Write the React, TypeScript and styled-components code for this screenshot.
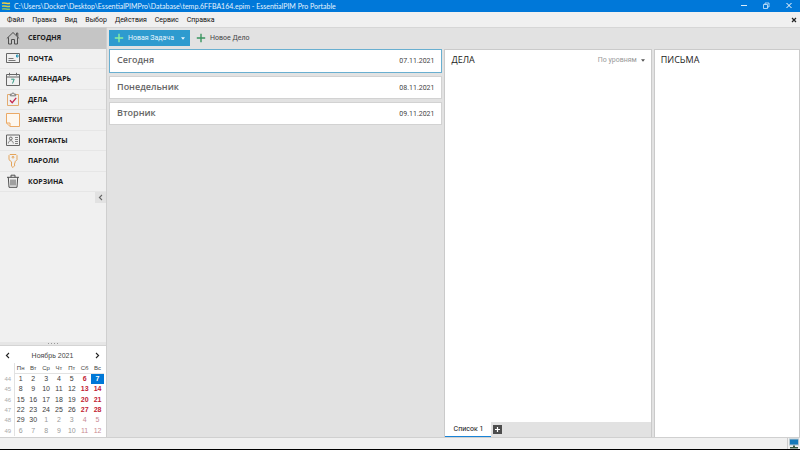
import React from 'react';
import styled, { createGlobalStyle } from 'styled-components';

const GlobalStyle = createGlobalStyle`
  * { box-sizing: border-box; }
  body { margin: 0; font-family: Roboto, "Noto Sans", sans-serif; font-size: 7px; color: #222; }
  button { font: inherit; color: inherit; background: none; border: 0; padding: 0; margin: 0; cursor: default; white-space: nowrap; }
  svg { display: block; flex: none; }
  h1, h2 { margin: 0; font-weight: 400; }
`;

const Window = styled.div`
  min-height: 100vh;
  display: flex;
  flex-direction: column;
  background: #f0f0f0;
  border-bottom: 1px solid #000;
`;

const TitleBar = styled.header`
  height: 12px;
  background: #0078d9;
  color: #e6f4ff;
  display: flex;
  align-items: center;
  padding: 0 7px 0 1px;
  gap: 3px;
`;

const Title = styled.h1`
  flex: 1;
  font-family: Lato, "Noto Sans", sans-serif;
  font-size: 7px;
  line-height: 12px;
  white-space: nowrap;
`;

const WindowButtons = styled.div`
  display: flex;
  gap: 14px;
`;

const MenuBar = styled.nav`
  height: 15px;
  display: flex;
  align-items: center;
  gap: 8px;
  padding: 0 3px 0 7px;
  color: #111;
`;

const MenuClose = styled.button`
  margin-left: auto;
`;

const Body = styled.div`
  flex: 1;
  display: flex;
`;

const Sidebar = styled.aside`
  width: 107px;
  flex: none;
  display: flex;
  flex-direction: column;
  border-top: 1px solid #cfcfcf;
  border-right: 1px solid #cfcfcf;
`;

const NavList = styled.nav`
  height: 164px;
  display: grid;
  grid-template-rows: repeat(8, 1fr);
`;

const NavItem = styled.button<{ $active?: boolean }>`
  display: flex;
  align-items: center;
  gap: 8px;
  padding: 0 6px;
  text-align: left;
  font-family: "Open Sans", "Noto Sans", sans-serif;
  font-size: 7px;
  font-weight: 700;
  color: #1c1c1c;
  background: ${p => (p.$active ? '#c5c5c5' : 'transparent')};
  border-bottom: 1px solid ${p => (p.$active ? '#c5c5c5' : '#e6e6e6')};
`;

const CollapseButton = styled.button`
  align-self: flex-end;
  width: 11px;
  height: 11px;
  display: grid;
  place-items: center;
  background: #e2e2e2;
`;

const Splitter = styled.div`
  margin-top: auto;
  height: 4px;
  display: flex;
  align-items: center;
  justify-content: center;
  gap: 2px;
  background: #e6e6e6;
  border-bottom: 1px solid #d4d4d4;
`;

const Dot = styled.span`
  width: 1px;
  height: 1px;
  background: #999;
`;

const Calendar = styled.section`
  background: #fff;
  font-family: "Liberation Sans", Arial, sans-serif;
  padding: 2px 2px 1px;
`;

const CalendarHead = styled.div`
  display: flex;
  align-items: center;
  justify-content: space-between;
  height: 15px;
  padding: 0 4px 0 3px;
  color: #444;
`;

const Days = styled.table`
  width: 100%;
  height: 73px;
  table-layout: fixed;
  border-collapse: collapse;
  text-align: center;
  line-height: 8px;
`;

const DayName = styled.th`
  height: 10px;
  padding: 0;
  font-weight: 400;
  font-size: 6px;
  color: #444;
  border-bottom: 1px solid #e2e2e2;
`;

const WeekNumber = styled.th`
  padding: 0;
  width: 12px;
  font-weight: 400;
  font-size: 6px;
  color: #aaa;
  border-right: 1px solid #e2e2e2;
`;

const Day = styled.td<{ $weekend: boolean; $muted: boolean; $selected: boolean }>`
  padding: 0;
  color: ${p => (p.$selected ? '#fff' : p.$muted ? (p.$weekend ? '#c98a92' : '#999') : p.$weekend ? '#c22233' : '#3c3c3c')};
  font-weight: ${p => (p.$weekend && !p.$muted ? 700 : 400)};
  background: ${p => (p.$selected ? '#0078d7' : 'transparent')};
`;

const Workspace = styled.main`
  flex: 1;
  min-width: 0;
  display: flex;
  flex-direction: column;
  background: #e2e2e2;
  border-top: 1px solid #d6d6d6;
`;

const Toolbar = styled.div`
  height: 21px;
  display: flex;
  align-items: center;
  padding: 2px 2px 3px;
  gap: 6px;
`;

const SplitButton = styled.div`
  height: 16px;
  width: 81px;
  display: flex;
  background: #2e9bcf;
  color: #e8f6fd;
`;

const ToolButton = styled.button`
  flex: 1;
  display: flex;
  align-items: center;
  gap: 4px;
  padding-left: 5px;
`;

const PlainToolButton = styled(ToolButton)`
  flex: none;
  padding: 0;
  color: #444;
`;

const DropButton = styled.button`
  width: 15px;
  display: grid;
  place-items: center;
`;

const Columns = styled.div`
  flex: 1;
  display: grid;
  grid-template-columns: 335fr 207fr 146fr;
  column-gap: 2px;
`;

const Agenda = styled.div`
  display: flex;
  flex-direction: column;
  gap: 3px;
  padding: 0 0 0 2px;
`;

const DayCard = styled.button<{ $active?: boolean }>`
  height: ${p => (p.$active ? 24 : 23)}px;
  display: flex;
  align-items: center;
  justify-content: space-between;
  padding: 0 7px;
  background: #fff;
  border: 1px solid ${p => (p.$active ? '#69afd0' : '#d2d2d2')};
  color: #666;
`;

const DayTitle = styled.span`
  font-family: "Open Sans", "Noto Sans", sans-serif;
  font-size: 9px;
  line-height: 12px;
  padding-bottom: 2px;
  font-weight: 600;
`;

const DayDate = styled.span`
  font-size: 7px;
  color: #444;
`;

const Panel = styled.section`
  display: flex;
  flex-direction: column;
  background: #fff;
  border: 1px solid #cacaca;
  border-bottom: 0;
`;

const PanelHead = styled.div`
  height: 20px;
  display: flex;
  align-items: center;
  justify-content: space-between;
  padding: 0 6px;
`;

const PanelTitle = styled.h2`
  font-family: "Open Sans", "Noto Sans", sans-serif;
  font-size: 9px;
  line-height: 12px;
  color: #222;
`;

const SortButton = styled.button`
  display: flex;
  align-items: center;
  gap: 4px;
  color: #999;
`;

const Tabs = styled.div`
  margin-top: auto;
  height: 15px;
  display: flex;
  align-items: stretch;
  gap: 2px;
  background: #e2e2e2;
`;

const Tab = styled.button`
  width: 46px;
  background: #fff;
  border-bottom: 1px solid #1883d7;
  color: #111;
`;

const StatusBar = styled.footer`
  height: 12px;
  display: flex;
  align-items: center;
  justify-content: flex-end;
  border-top: 1px solid #d0d0d0;
  padding: 0 1px;
`;

const StatusCell = styled.div`
  border-left: 1px solid #ccc;
  padding-left: 1px;
`;

const Plus = ({ color }: { color: string }) => (
  <svg width="10" height="10" viewBox="0 0 10 10" stroke={color} strokeWidth="1.4"><path d="M5 .8v8.4M.8 5h8.4" /></svg>
);

const Caret = ({ color }: { color: string }) => (
  <svg width="4" height="3" viewBox="0 0 5 3"><path d="M0 0h5L2.500 3z" fill={color} /></svg>
);

const Chevron = ({ flip, color = '#222' }: { flip?: boolean; color?: string }) => (
  <svg width="5" height="7" viewBox="0 0 5 7" fill="none" stroke={color} strokeWidth="1.1">
    <path d={flip ? 'M1 1l2.600 2.500L1 6' : 'M4 1L1.400 3.500 4 6'} />
  </svg>
);

const icons: Record<string, React.ReactNode> = {
  home: <g stroke="#505050"><path d="M.8 7.500L7 1.500l6.200 6M2.500 6.300V13H5.500V8.500h3V13h3V6.300M10.500 4.500V2h1.300v3.800" /></g>,
  mail: <g stroke="#666"><path d="M.5 2.500h13v9H.5z" /><path d="M2.500 7.500h5M2.500 9.500h7" stroke="#777" /><path d="M10.500 4h1.500v2h-1.500z" stroke="#2896b8" /></g>,
  calendar: <g stroke="#666"><path d="M.5 2.500h13v11H.5zM.5 5h13M3.500.8v2.700M10.500.8v2.700" /><path d="M5.200 7.200h3L6.500 11.500" stroke="#2d9880" /></g>,
  tasks: <g><path d="M1.500 2.500h11v11h-11z" stroke="#e2ab70" /><path d="M4.300 3.800V2.200h1.500C6 .5 8 .5 8.200 2.200h1.500v1.600z" stroke="#777" fill="#f0f0f0" /><path d="M4 8.300l2.200 2.400 4-4.900" stroke="#c52850" strokeWidth="1.300" /></g>,
  notes: <path d="M.5.500h13v13H4L.5 10zM.5 10H4v3.500" stroke="#eba965" fill="#fdf7ef" />,
  contacts: <g stroke="#666"><path d="M.5 2h13v10.500H.5z" /><circle cx="4.800" cy="5.500" r="1.400" /><path d="M2.300 10.500c0-3.800 5-3.800 5 0M9 4.500h3M9 6.500h3M9 8.500h3M9 10.500h3" strokeWidth=".8" /></g>,
  key: <g stroke="#e5a45a"><path d="M4 .5h6l1 1v4.200L9 7.800v1.500l-1 .8 1 .9-1 1.300-1 1.200-1.500-1.300V7.800L3 5.700V1.500z" /><circle cx="7" cy="3.200" r=".9" /></g>,
  trash: <g stroke="#505050"><path d="M1 3.300h12M5 3.300V1.200h4v2.100M2.300 3.300l.7 10h8l.7-10M5 5.500v6M7 5.500v6M9 5.500v6" /></g>,
};

const navItems = [
  ['home', 'СЕГОДНЯ'], ['mail', 'ПОЧТА'], ['calendar', 'КАЛЕНДАРЬ'], ['tasks', 'ДЕЛА'],
  ['notes', 'ЗАМЕТКИ'], ['contacts', 'КОНТАКТЫ'], ['key', 'ПАРОЛИ'], ['trash', 'КОРЗИНА'],
];
const menuItems = ['Файл', 'Правка', 'Вид', 'Выбор', 'Действия', 'Сервис', 'Справка'];
const dayNames = ['Пн', 'Вт', 'Ср', 'Чт', 'Пт', 'Сб', 'Вс'];
const agendaDays = [['Сегодня', '07.11.2021'], ['Понедельник', '08.11.2021'], ['Вторник', '09.11.2021']];
const weeks = [44, 45, 46, 47, 48, 49];

export default function App() {
  return (
    <Window>
      <GlobalStyle />
      <TitleBar>
        <svg width="10" height="10" viewBox="0 0 9 10" fill="none" strokeWidth="1.500">
          <path d="M.5 2.300c3-1 5 .8 8 0" stroke="#f2d044" />
          <path d="M.5 5.200c3-1 5 .8 8 0" stroke="#c9cf52" />
          <path d="M.5 8.100c3-1 5 .8 8 0" stroke="#8bc063" />
        </svg>
        <Title>C:\Users\Docker\Desktop\EssentialPIMPro\Database\temp.6FFBA164.epim - EssentialPIM Pro Portable</Title>
        <WindowButtons>
          <button aria-label="Свернуть"><svg width="8" height="8" viewBox="0 0 8 8" stroke="#d8ecfb"><path d="M1 3.500h6" /></svg></button>
          <button aria-label="Восстановить"><svg width="9" height="8" viewBox="0 0 9 8" fill="none" stroke="#d8ecfb" strokeWidth=".8"><path d="M1.500 2.500h4v4h-4zM3 2.500V1h4v4H5.500" /></svg></button>
          <button aria-label="Закрыть"><svg width="8" height="8" viewBox="0 0 8 8" stroke="#fff"><path d="M1.500 1l5 5M6.500 1l-5 5" /></svg></button>
        </WindowButtons>
      </TitleBar>
      <MenuBar>
        {menuItems.map(m => <button key={m}>{m}</button>)}
        <MenuClose aria-label="Закрыть вкладку"><svg width="6" height="6" viewBox="0 0 6 6" stroke="#222" strokeWidth="1.200"><path d="M1 1l4 4M5 1L1 5" /></svg></MenuClose>
      </MenuBar>
      <Body>
        <Sidebar>
          <NavList>
            {navItems.map(([icon, label], i) => (
              <NavItem key={icon} $active={i === 0}>
                <svg width="14" height="14" viewBox="0 0 14 14" fill="none">{icons[icon]}</svg>
                {label}
              </NavItem>
            ))}
          </NavList>
          <CollapseButton aria-label="Свернуть панель"><Chevron color="#666" /></CollapseButton>
          <Splitter><Dot /><Dot /><Dot /><Dot /></Splitter>
          <Calendar>
            <CalendarHead>
              <button aria-label="Предыдущий месяц"><Chevron /></button>
              <span>Ноябрь 2021</span>
              <button aria-label="Следующий месяц"><Chevron flip /></button>
            </CalendarHead>
            <Days>
              <thead>
                <tr><WeekNumber />{dayNames.map(d => <DayName key={d}>{d}</DayName>)}</tr>
              </thead>
              <tbody>
                {weeks.map((week, w) => (
                  <tr key={week}>
                    <WeekNumber>{week}</WeekNumber>
                    {dayNames.map((d, i) => {
                      const n = w * 7 + i + 1;
                      return (
                        <Day key={d} $weekend={i > 4} $muted={n > 30} $selected={n === 7}>
                          {n > 30 ? n - 30 : n}
                        </Day>
                      );
                    })}
                  </tr>
                ))}
              </tbody>
            </Days>
          </Calendar>
        </Sidebar>
        <Workspace>
          <Toolbar>
            <SplitButton>
              <ToolButton><Plus color="#8bf0a0" />Новая Задача</ToolButton>
              <DropButton aria-label="Другие задачи"><Caret color="#e8f6fd" /></DropButton>
            </SplitButton>
            <PlainToolButton><Plus color="#3a9560" />Новое Дело</PlainToolButton>
          </Toolbar>
          <Columns>
            <Agenda>
              {agendaDays.map(([name, date], i) => (
                <DayCard key={date} $active={i === 0}>
                  <DayTitle>{name}</DayTitle>
                  <DayDate>{date}</DayDate>
                </DayCard>
              ))}
            </Agenda>
            <Panel>
              <PanelHead>
                <PanelTitle>ДЕЛА</PanelTitle>
                <SortButton>По уровням<Caret color="#555" /></SortButton>
              </PanelHead>
              <Tabs>
                <Tab>Список 1</Tab>
                <button aria-label="Добавить список">
                  <svg width="9" height="9" viewBox="0 0 9 9"><path d="M0 0h9v9H0z" fill="#4d4d4d" /><path d="M4.500 2v5M2 4.500h5" stroke="#fff" strokeWidth="1.200" /></svg>
                </button>
              </Tabs>
            </Panel>
            <Panel>
              <PanelHead><PanelTitle>ПИСЬМА</PanelTitle></PanelHead>
            </Panel>
          </Columns>
        </Workspace>
      </Body>
      <StatusBar>
        <StatusCell>
          <svg width="10" height="11" viewBox="0 0 10 11">
            <path d="M0 .5h10v7H0z" fill="#b5c7d0" />
            <path d="M1 1.500h8v5H1z" fill="#1478b8" />
            <path d="M4 7.500h2V9h3v1.500H1V9h3z" fill="#3b5b42" />
          </svg>
        </StatusCell>
      </StatusBar>
    </Window>
  );
}
